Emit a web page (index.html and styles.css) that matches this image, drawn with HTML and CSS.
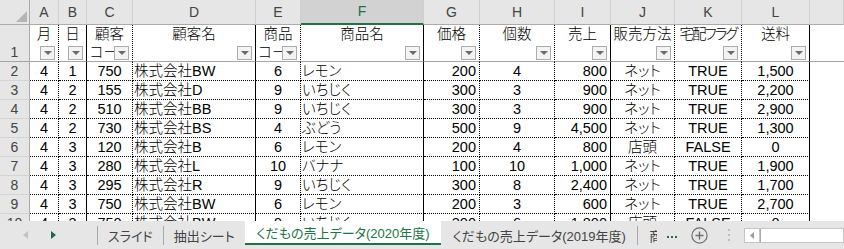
FILE: index.html
```html
<!DOCTYPE html>
<html lang="ja">
<head>
  <meta charset="UTF-8">
  <title>くだもの売上データ</title>
  <link rel="stylesheet" href="styles.css">
</head>
<body>
  <div class="sheet">
    <div class="row colhdr">
      <div class="corner"><svg width="11" height="11"><polygon points="11,0 11,11 0,11" fill="#b5b5b5"/></svg></div>
      <div>A</div><div>B</div><div>C</div><div>D</div><div>E</div>
      <div class="sel">F</div>
      <div>G</div><div>H</div><div>I</div><div>J</div><div>K</div><div>L</div><div></div>
    </div>

    <div class="row cells head">
      <div class="rh">1</div>
      <div>月<span class="flt"></span></div>
      <div>日<span class="flt"></span></div>
      <div>顧客<br>コード<span class="flt"></span></div>
      <div>顧客名<span class="flt"></span></div>
      <div>商品<br>コード<span class="flt"></span></div>
      <div>商品名<span class="flt"></span></div>
      <div>価格<span class="flt"></span></div>
      <div>個数<span class="flt"></span></div>
      <div>売上<span class="flt"></span></div>
      <div>販売方法<span class="flt"></span></div>
      <div class="tight">宅配フラグ<span class="flt"></span></div>
      <div>送料<span class="flt"></span></div>
      <div></div>
    </div>

    <div class="row cells">
      <div class="rh">2</div><div>4</div><div>1</div><div>750</div><div>株式会社BW</div><div>6</div><div>レモン</div>
      <div>200</div><div>4</div><div>800</div><div>ネット</div><div>TRUE</div><div>1,500</div><div></div>
    </div>
    <div class="row cells">
      <div class="rh">3</div><div>4</div><div>2</div><div>155</div><div>株式会社D</div><div>9</div><div>いちじく</div>
      <div>300</div><div>3</div><div>900</div><div>ネット</div><div>TRUE</div><div>2,200</div><div></div>
    </div>
    <div class="row cells">
      <div class="rh">4</div><div>4</div><div>2</div><div>510</div><div>株式会社BB</div><div>9</div><div>いちじく</div>
      <div>300</div><div>3</div><div>900</div><div>ネット</div><div>TRUE</div><div>2,900</div><div></div>
    </div>
    <div class="row cells">
      <div class="rh">5</div><div>4</div><div>2</div><div>730</div><div>株式会社BS</div><div>4</div><div>ぶどう</div>
      <div>500</div><div>9</div><div>4,500</div><div>ネット</div><div>TRUE</div><div>1,300</div><div></div>
    </div>
    <div class="row cells">
      <div class="rh">6</div><div>4</div><div>3</div><div>120</div><div>株式会社B</div><div>6</div><div>レモン</div>
      <div>200</div><div>4</div><div>800</div><div>店頭</div><div>FALSE</div><div>0</div><div></div>
    </div>
    <div class="row cells">
      <div class="rh">7</div><div>4</div><div>3</div><div>280</div><div>株式会社L</div><div>10</div><div>バナナ</div>
      <div>100</div><div>10</div><div>1,000</div><div>ネット</div><div>TRUE</div><div>1,900</div><div></div>
    </div>
    <div class="row cells">
      <div class="rh">8</div><div>4</div><div>3</div><div>295</div><div>株式会社R</div><div>9</div><div>いちじく</div>
      <div>300</div><div>8</div><div>2,400</div><div>ネット</div><div>TRUE</div><div>1,700</div><div></div>
    </div>
    <div class="row cells">
      <div class="rh">9</div><div>4</div><div>3</div><div>750</div><div>株式会社BW</div><div>6</div><div>レモン</div>
      <div>200</div><div>3</div><div>600</div><div>ネット</div><div>TRUE</div><div>2,700</div><div></div>
    </div>
    <div class="row cells">
      <div class="rh">10</div><div>4</div><div>3</div><div>750</div><div>株式会社BW</div><div>9</div><div>いちじく</div>
      <div>300</div><div>6</div><div>1,800</div><div>店頭</div><div>FALSE</div><div>0</div><div></div>
    </div>
  </div>

  <div class="tabs">
    <div class="nav">
      <svg class="arr-l" width="5" height="8"><polygon points="5,0 5,8 0,4" fill="#c2c2c2"/></svg>
      <svg class="arr-r" width="5" height="8"><polygon points="0,0 5,4 0,8" fill="#1e6b40"/></svg>
    </div>
    <div class="sep"></div>
    <div class="tab w1">スライド</div>
    <div class="sep"></div>
    <div class="tab w2">抽出シート</div>
    <div class="tab on">くだもの売上データ(2020年度)</div>
    <div class="tab w3">くだもの売上データ(2019年度)</div>
    <div class="sep"></div>
    <div class="cut">商品</div>
    <svg class="more" width="11" height="3"><rect x="0" y="0" width="2" height="2" fill="#217346"/><rect x="4" y="0" width="2" height="2" fill="#217346"/><rect x="8" y="0" width="2" height="2" fill="#217346"/></svg>
    <svg class="plus" width="17" height="17"><circle cx="8.5" cy="8.5" r="7.6" fill="none" stroke="#6e6e6e" stroke-width="1.2"/><path d="M8.5 4.5v8M4.5 8.5h8" stroke="#6e6e6e" stroke-width="1.4"/></svg>
    <svg class="vdots" width="2" height="12"><rect x="0" y="0" width="2" height="2" fill="#bdbdbd"/><rect x="0" y="5" width="2" height="2" fill="#bdbdbd"/><rect x="0" y="10" width="2" height="2" fill="#bdbdbd"/></svg>
    <div class="hscroll">
      <div class="hs-btn"><svg width="4" height="7"><polygon points="4,0 4,7 0,3.5" fill="#9a9a9a"/></svg></div>
      <div class="hs-thumb"></div>
    </div>
  </div>
</body>
</html>
```

FILE: styles.css
```css
/* Spreadsheet look */
* {
  box-sizing: border-box;
}
body {
  margin: 0;
  width: 844px;
  height: 249px;
  overflow: hidden;
  background: #fff;
  font-family: "Liberation Sans", "Noto Sans CJK JP", sans-serif;
  font-feature-settings: "palt";
  color: #000;
}
.sheet {
  height: 221px;
  overflow: hidden;
}
.row {
  display: grid;
  grid-template-columns: 30px 29px 28px 46px 123px 45px 123px 56px 75px 56px 64px 67px 68px 1fr;
  height: 19px;
  font-size: 14.5px;
  line-height: 18px;
}

/* column letters */
.colhdr {
  height: 25px;
}
.colhdr > div {
  background: #e6e6e6;
  border-right: 1px solid #d0d0d0;
  border-bottom: 1px solid #ababab;
  color: #444;
  font-size: 14px;
  line-height: 24px;
  text-align: center;
}
.colhdr > .corner {
  display: flex;
  justify-content: flex-end;
  align-items: flex-end;
  padding: 0 2px 2px 0;
  border-right-color: #ababab;
}
.colhdr > .sel {
  background: #d2d2d2;
  color: #217346;
  border-bottom: 2px solid #217346;
  line-height: 23px;
}

/* data cells */
.cells > div {
  position: relative;
  padding: 0 2px;
  white-space: nowrap;
  overflow: hidden;
  border-bottom: 1px dotted #000;
  text-align: center;
  font-weight: 300;
}
.cells > div:nth-child(2),
.cells > div:nth-child(4),
.cells > div:nth-child(6),
.cells > div:nth-child(8),
.cells > div:nth-child(9),
.cells > div:nth-child(11),
.cells > div:nth-child(12) {
  border-right: 1px dotted #000;
}
.cells > div:nth-child(3),
.cells > div:nth-child(5),
.cells > div:nth-child(7),
.cells > div:nth-child(10),
.cells > div:nth-child(13) {
  border-right: 1px solid #000;
}
.cells > div:nth-child(5),
.cells > div:nth-child(7) {
  text-align: left;
  padding-left: 1px;
}
.cells > div:nth-child(8),
.cells > div:nth-child(10) {
  text-align: right;
  padding-right: 3px;
}
.cells > div:nth-child(14) {
  border-bottom: none;
}
.cells > div.rh {
  background: #e6e6e6;
  color: #444;
  font-size: 14px;
  font-weight: 400;
  border-right: 1px solid #ababab;
  border-bottom: 1px solid #d4d4d4;
  text-align: center;
}

/* header row with filter buttons */
.head {
  height: 37px;
}
.head > div,
.head > div:nth-child(5),
.head > div:nth-child(7),
.head > div:nth-child(8),
.head > div:nth-child(10) {
  text-align: center;
  padding: 0;
  border-bottom: 1px solid #a6a6a6;
}
.head > div:nth-child(14) {
  border-bottom: 1px solid #a6a6a6;
}
.head > div.tight {
  letter-spacing: -2px;
}
.head > div.rh {
  display: flex;
  justify-content: center;
  align-items: flex-end;
  border-bottom: 1px solid #a6a6a6;
}
.flt {
  position: absolute;
  right: 3px;
  bottom: 1px;
  width: 15px;
  height: 14px;
  border: 1px solid #acacac;
  background: #f3f3f3;
}
.flt::after {
  content: "";
  position: absolute;
  left: 3px;
  top: 4px;
  border-left: 4px solid transparent;
  border-right: 4px solid transparent;
  border-top: 4px solid #6b6b6b;
}

/* sheet tabs */
.tabs {
  display: flex;
  align-items: center;
  height: 28px;
  background: #e6e6e6;
  font-size: 13px;
  color: #444;
}
.nav {
  width: 97px;
  display: flex;
  align-items: center;
}
.arr-l {
  margin-left: 23px;
}
.arr-r {
  margin-left: 23px;
}
.sep {
  width: 1px;
  height: 19px;
  background: #a8a8a8;
}
.tab {
  display: flex;
  align-items: center;
  justify-content: center;
  height: 28px;
  white-space: nowrap;
  overflow: hidden;
}
.w1 {
  width: 65px;
}
.w2 {
  width: 81px;
}
.w3 {
  width: 196px;
}
.tab.on {
  align-self: flex-start;
  width: 197px;
  height: 24px;
  background: #fff;
  color: #217346;
  border-bottom: 2px solid #217346;
}
.cut {
  margin-left: 11px;
  width: 8px;
  overflow: hidden;
  white-space: nowrap;
}
.more {
  margin-left: 10px;
  margin-top: 4px;
}
.plus {
  margin-left: 13px;
}
.vdots {
  margin-left: 20px;
}
.hscroll {
  display: flex;
  margin-left: 14px;
  width: 100px;
  height: 15px;
  border: 1px solid #c6c6c6;
  background: #fff;
}
.hs-btn {
  width: 15px;
  display: flex;
  align-items: center;
  justify-content: center;
  border-right: 1px solid #c6c6c6;
}
.hs-thumb {
  flex: 1;
  border-left: 1px solid #ababab;
}
```
